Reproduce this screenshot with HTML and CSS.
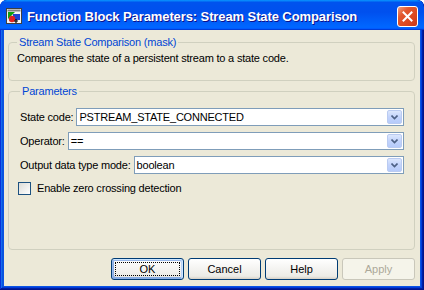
FILE: index.html
```html
<!DOCTYPE html>
<html lang="en">
<head>
    <meta charset="UTF-8">
    <title>Function Block Parameters: Stream State Comparison</title>
    <link rel="stylesheet" href="styles.css">
</head>
<body>
    <div class="window">
        <div class="titlebar">
            <svg class="app-icon" width="16" height="16" viewBox="0 0 16 16">
                <rect x="0.5" y="0.5" width="15" height="15" fill="#f4f4f4" stroke="#404040"/>
                <rect x="1.5" y="1.5" width="13" height="2" fill="#808080"/>
                <path d="M2 4 L9 4 L2 11 Z" fill="#10a010"/>
                <rect x="7" y="6" width="7" height="6" fill="#2040d0"/>
                <circle cx="6" cy="11" r="3.2" fill="#e02020"/>
                <path d="M10 11 V15 M8 13 H12" stroke="#000" stroke-width="1.2"/>
            </svg>
            <span class="title">Function Block Parameters: Stream State Comparison</span>
            <div class="close">
                <svg width="11" height="11" viewBox="0 0 11 11">
                    <path d="M1.5 1.5 L9.5 9.5 M9.5 1.5 L1.5 9.5" stroke="#fff" stroke-width="2" stroke-linecap="square"/>
                </svg>
            </div>
        </div>

        <div class="client">
            <fieldset class="group mask">
                <legend>Stream State Comparison (mask)</legend>
                <p class="description">Compares the state of a persistent stream to a state code.</p>
            </fieldset>

            <fieldset class="group params">
                <legend>Parameters</legend>
                <div class="row">
                    <label>State code:</label>
                    <div class="combo">
                        <span class="value">PSTREAM_STATE_CONNECTED</span>
                        <span class="arrow"><svg width="7" height="5" viewBox="0 0 7 5"><path d="M0.5 0.5 L3.5 3.5 L6.5 0.5" fill="none" stroke="#4d6185" stroke-width="1.6"/></svg></span>
                    </div>
                </div>
                <div class="row">
                    <label>Operator:</label>
                    <div class="combo">
                        <span class="value">==</span>
                        <span class="arrow"><svg width="7" height="5" viewBox="0 0 7 5"><path d="M0.5 0.5 L3.5 3.5 L6.5 0.5" fill="none" stroke="#4d6185" stroke-width="1.6"/></svg></span>
                    </div>
                </div>
                <div class="row">
                    <label>Output data type mode:</label>
                    <div class="combo">
                        <span class="value">boolean</span>
                        <span class="arrow"><svg width="7" height="5" viewBox="0 0 7 5"><path d="M0.5 0.5 L3.5 3.5 L6.5 0.5" fill="none" stroke="#4d6185" stroke-width="1.6"/></svg></span>
                    </div>
                </div>
                <label class="check">
                    <span class="box"></span>
                    Enable zero crossing detection
                </label>
            </fieldset>

            <div class="buttons">
                <button class="default"><span class="focus">OK</span></button>
                <button>Cancel</button>
                <button>Help</button>
                <button disabled>Apply</button>
            </div>
        </div>
    </div>
</body>
</html>
```

FILE: styles.css
```css
body {
    margin: 0;
    width: 424px;
    height: 290px;
    overflow: hidden;
    font-family: "Liberation Sans", Arial, sans-serif;
    font-size: 11px;
    letter-spacing: -0.2px;
    background: #fff;
}
.window {
    width: 424px;
    height: 290px;
    display: flex;
    flex-direction: column;
    background: #0a53e3;
    border-radius: 7px 7px 0 0;
    box-shadow: inset -1px -1px #00138c, inset 1px 1px #0831d9, inset -2px -2px #001ea0, inset 2px 2px #166aee, inset -3px -3px #003bda, inset 3px 3px #0855dd;
    overflow: hidden;
}
.titlebar {
    height: 30px;
    flex: none;
    display: flex;
    align-items: center;
    padding: 2px 6px 0 6px;
    box-sizing: border-box;
    background: linear-gradient(180deg, #0997ff, #0053ee 8%, #0050ee 40%, #06f 88%, #06f 93%, #005bff 95%, #003dd7 96%, #003dd7);
    border-radius: 7px 7px 0 0;
}
.app-icon {
    flex: none;
}
.title {
    flex: 1;
    margin-left: 5px;
    color: #fff;
    font-size: 13px;
    font-weight: bold;
    letter-spacing: -0.1px;
    text-shadow: 1px 1px #0f1089;
    white-space: nowrap;
}
.close {
    width: 21px;
    height: 21px;
    box-sizing: border-box;
    border: 1px solid #fff;
    border-radius: 3px;
    background: linear-gradient(135deg, #f0a080 0%, #e2582f 30%, #d9461f 70%, #c5371a 100%);
    display: flex;
    align-items: center;
    justify-content: center;
}
.client {
    flex: 1;
    margin: 0 4px 4px 4px;
    background: #ece9d8;
    display: flex;
    flex-direction: column;
    padding: 0 5px 0 4px;
}
.group {
    margin: 0;
    border: 1px solid #d0d0bf;
    border-radius: 4px;
    min-width: 0;
}
.group legend {
    color: #0046d5;
    padding: 0 2px;
    line-height: 13px;
}
.mask {
    margin-top: 6px;
    padding: 3px 8px 15px 8px;
}
.description {
    margin: 0;
    line-height: 13px;
}
.params {
    margin-top: 4px;
    flex: 1;
    padding: 10px 10px 0 11px;
    display: flex;
    flex-direction: column;
    gap: 6px;
}
.row {
    display: flex;
    align-items: center;
    gap: 3px;
    height: 18px;
}
.row label {
    white-space: nowrap;
}
.combo {
    flex: 1;
    height: 18px;
    box-sizing: border-box;
    border: 1px solid #7f9db9;
    background: #fff;
    display: flex;
    align-items: center;
}
.combo .value {
    flex: 1;
    padding-left: 2px;
}
.arrow {
    width: 15px;
    height: 14px;
    margin: 1px;
    box-sizing: border-box;
    border: 1px solid #bacbf1;
    border-radius: 2px;
    background: linear-gradient(180deg, #dce7fd, #c2d3fc 50%, #b6cbfa);
    display: flex;
    align-items: center;
    justify-content: center;
}
.check {
    display: flex;
    align-items: center;
    gap: 6px;
    margin-top: 2px;
    margin-left: -2px;
    line-height: 13px;
}
.box {
    width: 13px;
    height: 13px;
    box-sizing: border-box;
    border: 1px solid #1c5180;
    background: linear-gradient(135deg, #dcdcd7, #fff);
}
.buttons {
    flex: none;
    display: flex;
    justify-content: flex-end;
    gap: 4px;
    margin: 8px 0 6px 0;
}
button {
    width: 73px;
    height: 22px;
    font-family: "Liberation Sans", Arial, sans-serif;
    font-size: 11px;
    color: #000;
    border: 1px solid #003c74;
    border-radius: 3px;
    background: linear-gradient(180deg, #fff, #ecebe6 86%, #d6d0c5);
    padding: 0;
}
button.default {
    box-shadow: inset -1px 1px #cee7ff, inset 1px 2px #98b8ea, inset -2px 2px #bcd4f6, inset 1px -1px #89ade4, inset 2px -2px #89ade4;
    padding: 3px;
}
.focus {
    display: flex;
    align-items: center;
    justify-content: center;
    height: 100%;
    box-sizing: border-box;
    border: 1px dotted #000;
}
button:disabled {
    border-color: #c9c7ba;
    color: #aca899;
    background: #f5f4ea;
}
```
